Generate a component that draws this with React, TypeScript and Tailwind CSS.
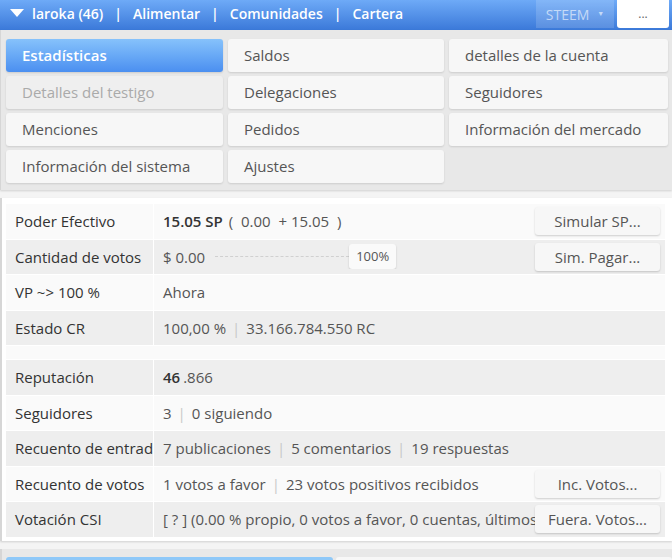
import { useState } from "react";

const tabs = [
  "Estadísticas",
  "Saldos",
  "detalles de la cuenta",
  "Detalles del testigo",
  "Delegaciones",
  "Seguidores",
  "Menciones",
  "Pedidos",
  "Información del mercado",
  "Información del sistema",
  "Ajustes",
];

const Sep = () => <span className="mx-[6px] text-[#c8c8c8]">|</span>;

const SideButton = ({ label }: { label: string }) => (
  <button className="shrink-0 mr-[5px] w-[125px] h-[28px] rounded-[3px] bg-[#f7f7f7] text-[15px] text-[#555] shadow-[0_1px_2px_rgba(0,0,0,0.18)]">
    {label}
  </button>
);

const Row = ({
  label,
  shade,
  children,
  action,
}: {
  label: string;
  shade: boolean;
  children: React.ReactNode;
  action?: string;
}) => (
  <div className={`flex h-[35.5px] border-b border-white ${shade ? "bg-[#eeeeee]" : "bg-[#fafafa]"}`}>
    <div className="w-[148px] shrink-0 border-r border-white pl-[9px] flex items-center text-[15px] text-[#333] whitespace-nowrap overflow-hidden">
      {label}
    </div>
    <div className="flex-1 min-w-0 flex items-center">
      <div className="flex-1 min-w-0 flex items-center pl-[9px] text-[15px] text-[#555] whitespace-nowrap overflow-hidden">
        {children}
      </div>
      {action && <SideButton label={action} />}
    </div>
  </div>
);

export default function App() {
  const [active, setActive] = useState(0);

  return (
    <div className="w-[672px] h-[560px] overflow-hidden bg-[#f4f4f4] font-['Open_Sans',sans-serif]">
      {/* top bar */}
      <div className="h-[30px] flex items-start bg-gradient-to-b from-[#6eaaf7] to-[#3b79d9] text-white text-[14px] font-semibold">
        <div className="h-[26px] flex items-center">
          <svg width="14" height="8" viewBox="0 0 14 8" className="ml-[10px] mr-[8px]">
            <path d="M0 0 H14 L7 8 Z" fill="#fff" />
          </svg>
          <span>laroka (46)</span>
          <span className="mx-[11px]">|</span>
          <span>Alimentar</span>
          <span className="mx-[11px]">|</span>
          <span>Comunidades</span>
          <span className="mx-[11px]">|</span>
          <span>Cartera</span>
        </div>
        <div className="ml-auto h-[28px] w-[78px] bg-white/15 flex items-center justify-center text-[14px] font-normal text-white/60">
          STEEM <span className="ml-[8px] text-[7px]">▼</span>
        </div>
        <div className="ml-[3px] mr-[3px] h-[28px] w-[52px] rounded-b-[3px] bg-white text-[#666] font-normal text-[12px] flex items-center justify-center">
          ...
        </div>
      </div>

      {/* tab grid */}
      <div className="bg-[#e8e8e8] border-l border-[#d6d6d6] pl-[5px] pt-[9px] pb-[7px] shadow-[0_1px_2px_rgba(0,0,0,0.15)]">
        <div className="grid grid-cols-[217px_216px_219px] gap-x-[5px] gap-y-[4px]">
          {tabs.map((t, i) => {
            const disabled = i === 3;
            const isActive = i === active;
            return (
              <button
                key={t}
                onClick={() => !disabled && setActive(i)}
                className={`h-[33px] rounded-[3px] text-left pl-[16px] text-[15px] shadow-[0_1px_2px_rgba(0,0,0,0.12)] ${
                  isActive
                    ? "bg-gradient-to-b from-[#86c2fb] to-[#4b8ff0] text-white font-semibold"
                    : disabled
                    ? "bg-[#efefef] text-[#aaa]"
                    : "bg-[#f7f7f7] text-[#555]"
                }`}
              >
                {t}
              </button>
            );
          })}
        </div>
      </div>

      {/* stats */}
      <div className="mt-[8px] border-l-2 border-[#d6d6d6] bg-white pl-[4px] pr-[7px] pt-[6px] pb-[3px] shadow-[0_1px_2px_rgba(0,0,0,0.15)]">
        <Row label="Poder Efectivo" shade={false} action="Simular SP...">
          <span className="font-semibold text-[#333]">15.05 SP</span>
          <span className="ml-[6px]">( &nbsp;0.00 &nbsp;+ 15.05 &nbsp;)</span>
        </Row>
        <Row label="Cantidad de votos" shade={true} action="Sim. Pagar...">
          <span>$ 0.00</span>
          <div className="ml-[10px] w-[134px] border-t border-dashed border-[#d0d0d0]" />
          <div className="h-[25px] w-[47px] shrink-0 rounded-[3px] bg-[#fafafa] shadow-[0_1px_2px_rgba(0,0,0,0.18)] text-[13px] text-[#555] flex items-center justify-center">
            100%
          </div>
        </Row>
        <Row label="VP ~> 100 %" shade={false}>
          <span>Ahora</span>
        </Row>
        <Row label="Estado CR" shade={true}>
          <span>100,00 %</span>
          <Sep />
          <span>33.166.784.550 RC</span>
        </Row>
        <div className="h-[14px] bg-[#fafafa] border-b border-white" />
        <Row label="Reputación" shade={true}>
          <span className="font-semibold text-[#333]">46</span>
          <span className="ml-[3px]">.866</span>
        </Row>
        <Row label="Seguidores" shade={false}>
          <span>3</span>
          <Sep />
          <span>0 siguiendo</span>
        </Row>
        <Row label="Recuento de entradas" shade={true}>
          <span>7 publicaciones</span>
          <Sep />
          <span>5 comentarios</span>
          <Sep />
          <span>19 respuestas</span>
        </Row>
        <Row label="Recuento de votos" shade={false} action="Inc. Votos...">
          <span>1 votos a favor</span>
          <Sep />
          <span>23 votos positivos recibidos</span>
        </Row>
        <Row label="Votación CSI" shade={true} action="Fuera. Votos...">
          <span>[ ? ] (0.00 % propio, 0 votos a favor, 0 cuentas, últimos 7 días)</span>
        </Row>
      </div>

      {/* bottom tabs */}
      <div className="mt-[8px] border-l-2 border-[#d6d6d6] bg-[#e8e8e8] pl-[4px] pt-[8px] flex gap-[3px]">
        <div className="w-[327px] h-[20px] rounded-t-[3px] bg-[#8ec8f8]" />
        <div className="flex-1 h-[20px] rounded-t-[3px] bg-[#f7f7f7]" />
      </div>
    </div>
  );
}
